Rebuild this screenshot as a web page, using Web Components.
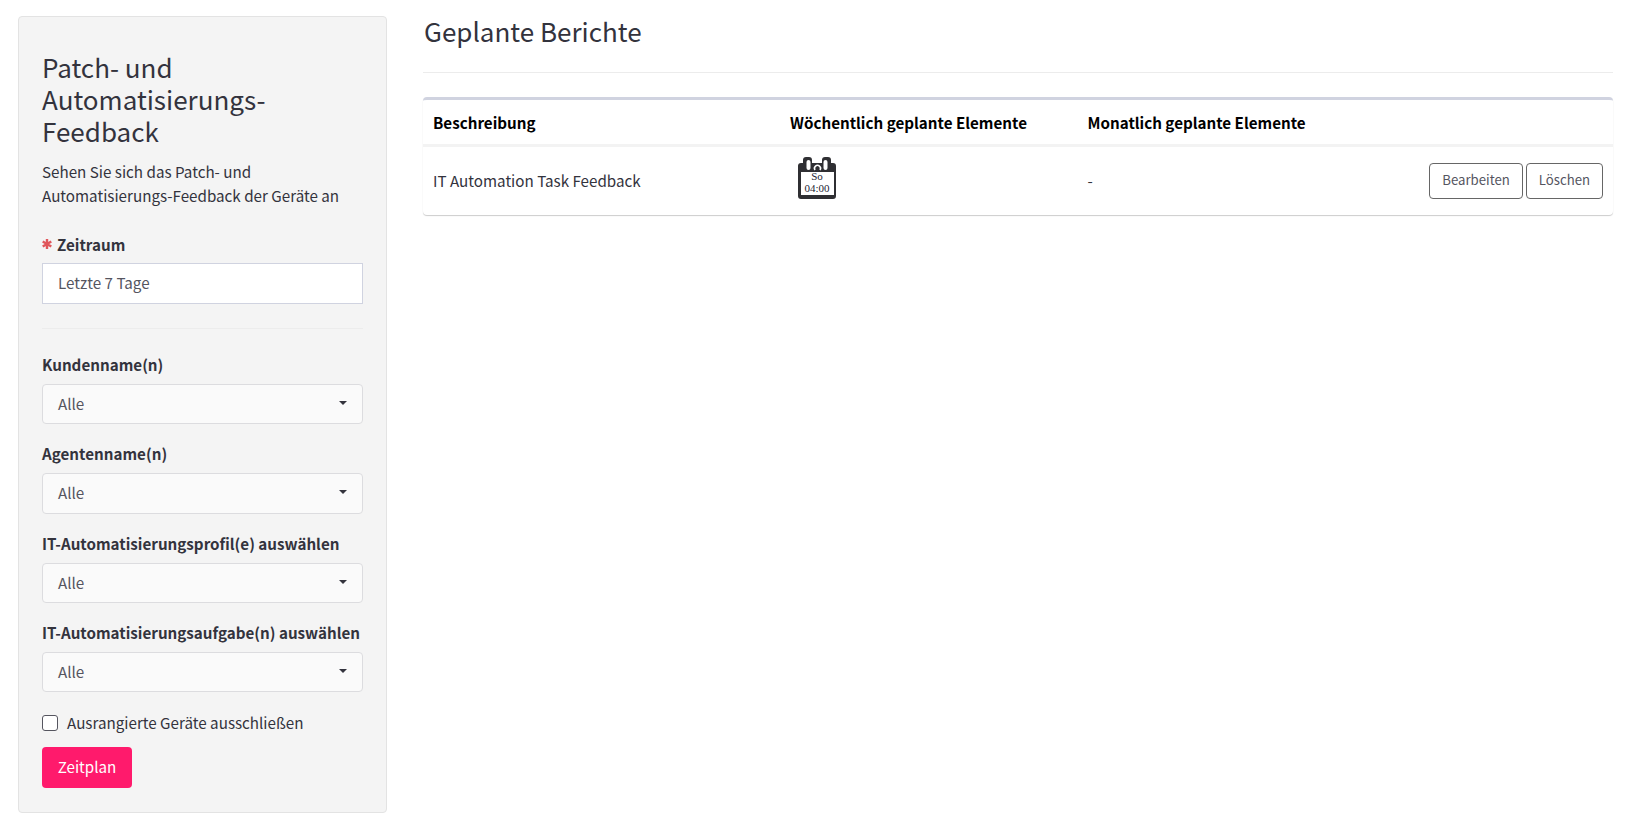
<!DOCTYPE html>
<html lang="de">
<head>
<meta charset="utf-8">
<title>Geplante Berichte</title>
<style>
    html, body{
        margin: 0;
        height: 100%;
        background: #fff;
        color: #33333d;
        font: 15.2px/24px "Noto Sans CJK SC", "Noto Sans", sans-serif;
    }
    body{
        display: flex;
        align-items: flex-start;
        overflow: hidden;
    }
</style>
</head>
<body>
<feedback-panel>
    <span slot="title">Patch- und Automatisierungs-Feedback</span>
    <span slot="description">Sehen Sie sich das Patch- und Automatisierungs-Feedback der Geräte an</span>
    <period-field label="Zeitraum" value="Letzte 7 Tage"></period-field>
    <select-field label="Kundenname(n)" value="Alle"></select-field>
    <select-field label="Agentenname(n)" value="Alle"></select-field>
    <select-field label="IT-Automatisierungsprofil(e) auswählen" value="Alle"></select-field>
    <select-field label="IT-Automatisierungsaufgabe(n) auswählen" value="Alle"></select-field>
</feedback-panel>
<scheduled-reports></scheduled-reports>

<script>
class FeedbackPanel extends HTMLElement{
    constructor(){
        super();
        this.attachShadow({mode: "open"});
        this.shadowRoot.innerHTML = `
        <style>
            :host{
                display: block;
                flex: none;
                box-sizing: border-box;
                width: 369px;
                height: 797px;
                margin: 16px 0 0 18px;
                padding: 34px 23px 0;
                background: #f4f4f4;
                border: 1px solid #e3e3e3;
                border-radius: 4px;
            }
            h2{
                margin: 0 0 12px;
                font-size: 26px;
                line-height: 32px;
                font-weight: 400;
            }
            p{
                margin: 0 0 25px;
            }
            .check{
                display: flex;
                align-items: center;
                gap: 9px;
                height: 24px;
                margin: 19px 0 12px;
            }
            .check span:last-child{
                margin-bottom: 2px;
            }
            .box{
                box-sizing: border-box;
                width: 16px;
                height: 16px;
                background: #fff;
                border: 1px solid #55555f;
                border-radius: 3px;
            }
            button{
                display: block;
                width: 90px;
                height: 41px;
                padding: 0 0 3px;
                border: 0;
                border-radius: 4px;
                background: #ff1a6c;
                color: #fff;
                font: inherit;
            }
        </style>
        <h2><slot name="title"></slot></h2>
        <p><slot name="description"></slot></p>
        <slot></slot>
        <div class="check"><span class="box"></span><span>Ausrangierte Geräte ausschließen</span></div>
        <button type="button">Zeitplan</button>
        `;
    }
}

class PeriodField extends HTMLElement{
    constructor(){
        super();
        this.attachShadow({mode: "open"});
        this.shadowRoot.innerHTML = `
        <style>
            :host{
                display: block;
                margin-bottom: 24px;
            }
            label{
                display: flex;
                align-items: center;
                gap: 5px;
                font-weight: 700;
                margin-bottom: 7px;
            }
            svg{
                width: 10px;
                height: 10px;
            }
            .input{
                box-sizing: border-box;
                height: 41px;
                padding: 0 15px;
                line-height: 37px;
                background: #fff;
                border: 1px solid #d0d3e0;
                color: #55555f;
            }
            hr{
                height: 1px;
                margin: 24px 0 0;
                border: 0;
                background: #ececec;
            }
        </style>
        <label>
            <svg viewBox="0 0 10 10"><path d="M5 0v10M0.7 2.5l8.6 5M0.7 7.5l8.6-5" stroke="#e0565b" stroke-width="2.4"/></svg>
            <span class="text"></span>
        </label>
        <div class="input"></div>
        <hr>
        `;
    }
    connectedCallback(){
        this.shadowRoot.querySelector(".text").textContent = this.getAttribute("label");
        this.shadowRoot.querySelector(".input").textContent = this.getAttribute("value");
    }
}

class SelectField extends HTMLElement{
    constructor(){
        super();
        this.attachShadow({mode: "open"});
        this.shadowRoot.innerHTML = `
        <style>
            :host{
                display: block;
                margin-bottom: 18px;
            }
            label{
                display: block;
                font-weight: 700;
                line-height: 22px;
                margin-bottom: 9px;
                white-space: nowrap;
            }
            .select{
                display: flex;
                align-items: center;
                justify-content: space-between;
                box-sizing: border-box;
                height: 40.33px;
                padding: 0 15px 2px;
                background: #fafafa;
                border: 1px solid #dcdcdf;
                border-radius: 4px;
                color: #55555f;
            }
            .caret{
                width: 0;
                height: 0;
                border-left: 4.5px solid transparent;
                border-right: 4.5px solid transparent;
                border-top: 4.5px solid #33333d;
            }
        </style>
        <label></label>
        <div class="select"><span class="value"></span><span class="caret"></span></div>
        `;
    }
    connectedCallback(){
        this.shadowRoot.querySelector("label").textContent = this.getAttribute("label");
        this.shadowRoot.querySelector(".value").textContent = this.getAttribute("value");
    }
}

class ScheduleIcon extends HTMLElement{
    constructor(){
        super();
        this.attachShadow({mode: "open"});
        this.shadowRoot.innerHTML = `
        <style>
            :host{
                display: block;
                position: relative;
                width: 40px;
                height: 42px;
                margin: 0 0 6px 7px;
            }
            svg{
                display: block;
                width: 40px;
                height: 42px;
            }
            span{
                position: absolute;
                left: 0;
                right: 0;
                text-align: center;
                font: 11px/11px "Liberation Serif", serif;
                color: #1d1d33;
            }
        </style>
        <svg viewBox="0 0 40 42">
            <path fill="#2f2f33" d="M4 6h2V3a3 3 0 0 1 3-3h3a3 3 0 0 1 3 3v3h10V3a3 3 0 0 1 3-3h3a3 3 0 0 1 3 3v3h2a3 3 0 0 1 3 3v30a3 3 0 0 1-3 3H4a3 3 0 0 1-3-3V9a3 3 0 0 1 3-3z"/>
            <rect x="4" y="15" width="33" height="23" fill="#fff"/>
            <rect x="9.5" y="3" width="4" height="10" rx="2" fill="#fff"/>
            <rect x="26.5" y="3" width="4" height="10" rx="2" fill="#fff"/>
            <path d="M18 13a3 3 0 1 1 5 0" fill="none" stroke="#fff" stroke-width="1.6"/>
        </svg>
        <span style="top:14px">So</span>
        <span style="top:26px">04:00</span>
        `;
    }
}

class ScheduledReports extends HTMLElement{
    constructor(){
        super();
        this.attachShadow({mode: "open"});
        this.shadowRoot.innerHTML = `
        <style>
            :host{
                display: block;
                flex: 1;
                margin: 0 17px 0 36px;
            }
            h1{
                margin: 15px 0 25px;
                padding-left: 1px;
                font-size: 26px;
                line-height: 32px;
                font-weight: 400;
            }
            hr{
                height: 1px;
                margin: 0 0 24px;
                border: 0;
                background: #ececec;
            }
            .table{
                border-top: 3px solid #d0d3e0;
                border-radius: 4px;
                box-shadow: 0 1px 1px rgba(0,0,0,.2);
            }
            .row{
                display: grid;
                grid-template-columns: 357px 297.5px 1fr auto;
                align-items: center;
                padding: 0 10px;
            }
            .head{
                height: 44px;
                font-weight: 700;
                color: #000;
                border-bottom: 3px solid #f3f3f3;
            }
            .body{
                height: 68px;
            }
            .body > span{
                margin-bottom: 2px;
            }
            .actions{
                display: flex;
                gap: 3px;
            }
            button{
                height: 36px;
                padding: 0 12px 2px;
                background: #fff;
                border: 1px solid #666;
                border-radius: 4px;
                color: #55555f;
                font: 13.2px/20px "Noto Sans CJK SC", "Noto Sans", sans-serif;
            }
        </style>
        <h1>Geplante Berichte</h1>
        <hr>
        <div class="table">
            <div class="row head">
                <span>Beschreibung</span>
                <span>Wöchentlich geplante Elemente</span>
                <span>Monatlich geplante Elemente</span>
                <span></span>
            </div>
            <div class="row body">
                <span>IT Automation Task Feedback</span>
                <schedule-icon></schedule-icon>
                <span>-</span>
                <div class="actions">
                    <button type="button">Bearbeiten</button>
                    <button type="button">Löschen</button>
                </div>
            </div>
        </div>
        `;
    }
}

customElements.define("feedback-panel", FeedbackPanel);
customElements.define("period-field", PeriodField);
customElements.define("select-field", SelectField);
customElements.define("schedule-icon", ScheduleIcon);
customElements.define("scheduled-reports", ScheduledReports);
</script>
</body>
</html>
